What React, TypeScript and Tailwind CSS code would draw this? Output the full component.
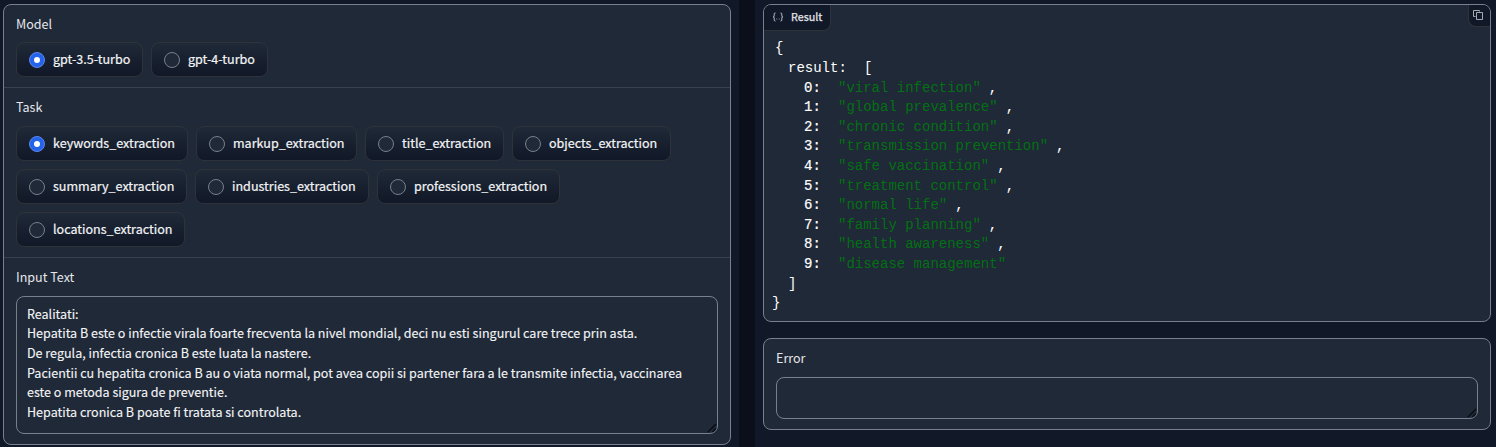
import React from 'react';

const models = [
  { name: 'gpt-3.5-turbo', width: 'w-[127px]', on: true },
  { name: 'gpt-4-turbo', width: 'w-[117px]' },
];

const tasks = [
  { name: 'keywords_extraction', width: 'w-[172px]', on: true },
  { name: 'markup_extraction', width: 'w-[161px]' },
  { name: 'title_extraction', width: 'w-[139px]' },
  { name: 'objects_extraction', width: 'w-[159px]' },
  { name: 'summary_extraction', width: 'w-[171px]' },
  { name: 'industries_extraction', width: 'w-[174px]' },
  { name: 'professions_extraction', width: 'w-[183px]' },
  { name: 'locations_extraction', width: 'w-[169px]' },
];

const keywords = [
  'viral infection',
  'global prevalence',
  'chronic condition',
  'transmission prevention',
  'safe vaccination',
  'treatment control',
  'normal life',
  'family planning',
  'health awareness',
  'disease management',
];

type Option = { name: string; width: string; on?: boolean };

function Options({ items }: { items: Option[] }) {
  return (
    <div className="flex flex-wrap gap-2">
      {items.map((o) => (
        <label
          key={o.name}
          className={`flex h-[35px] items-center whitespace-nowrap rounded-lg border border-[#2f3339] bg-linear-to-b from-[#1f2937] to-[#111827] pl-3 ${o.width}`}
        >
          <span
            className={`flex size-4 shrink-0 items-center justify-center rounded-full border ${
              o.on ? 'border-[#5c86ee] bg-[#2563eb]' : 'border-[#78808d] bg-[#1f2937]'
            }`}
          >
            {o.on && <span className="size-1.5 rounded-full bg-white" />}
          </span>
          <span className="mb-[2px] ml-2 text-[12.55px] leading-5 text-[#f3f4f6] [-webkit-text-stroke:0.2px]">{o.name}</span>
        </label>
      ))}
    </div>
  );
}

function Label({ children }: { children: React.ReactNode }) {
  return <div className="mb-2 h-5 text-[12.55px] leading-5 text-[#e5e7eb]">{children}</div>;
}

function Grip() {
  return (
    <svg className="absolute bottom-0 right-0 size-[10px]" viewBox="0 0 10 10" fill="none" stroke="#080b12" strokeWidth="1.3">
      <path d="M1 9 L9 1 M5.5 9 L9 5.5" />
    </svg>
  );
}

export default function App() {
  return (
    <div className="flex h-[447px] w-[1496px] justify-between overflow-hidden bg-[#0b0f19] font-['Noto_Sans_CJK_SC','Open_Sans',sans-serif]">
      <section className="w-[739px] bg-[#111827] pl-[3px] pt-1">
        <div className="h-[441px] w-[728px] overflow-hidden rounded-lg border border-[#78808d] bg-[#1f2937]">
          <div className="h-[83px] border-b border-[#374151] px-3 pt-[9px]">
            <Label>Model</Label>
            <Options items={models} />
          </div>
          <div className="h-[170px] border-b border-[#374151] px-3 pt-[9px]">
            <Label>Task</Label>
            <div className="mt-[9px]">
              <Options items={tasks} />
            </div>
          </div>
          <div className="px-3 pt-[9px]">
            <Label>Input Text</Label>
            <div className="relative mt-[9px] h-[138px] w-[702px] rounded-lg border border-[#78808d] px-[10px] pt-[6.8px] text-[12.54px] leading-[19.6px] text-[#f3f4f6] [-webkit-text-stroke:0.12px]">
              <p>Realitati:</p>
              <p>Hepatita B este o infectie virala foarte frecventa la nivel mondial, deci nu esti singurul care trece prin asta.</p>
              <p>De regula, infectia cronica B este luata la nastere.</p>
              <p>
                Pacientii cu hepatita cronica B au o viata normal, pot avea copii si partener fara a le transmite infectia, vaccinarea
                <br />
                este o metoda sigura de preventie.
              </p>
              <p>Hepatita cronica B poate fi tratata si controlata.</p>
              <Grip />
            </div>
          </div>
        </div>
      </section>

      <section className="flex w-[741px] flex-col gap-4 bg-[#111827] pl-2 pt-1">
        <div className="h-[318px] w-[728px] overflow-hidden rounded-lg border border-[#78808d] bg-[#1f2937]">
          <div className="flex items-start justify-between">
            <div className="flex h-[26px] w-[67px] items-center rounded-br-lg border-b border-r border-[#2f3339] bg-[#111827] pl-2">
              <svg className="mb-px size-3" viewBox="0 0 12 12" fill="none" stroke="#c3c7ce" strokeWidth="0.9">
                <path d="M3.5 2 H3 Q2.2 2 2.2 3 V5 Q2.2 6 1.2 6 Q2.2 6 2.2 7 V9 Q2.2 10 3 10 H3.5" />
                <path d="M8.5 2 H9 Q9.8 2 9.8 3 V5 Q9.8 6 10.8 6 Q9.8 6 9.8 7 V9 Q9.8 10 9 10 H8.5" />
                <path d="M4.4 8 H5.2 M6.8 8 H7.6" />
              </svg>
              <span className="mb-px ml-[7px] text-[10.75px] leading-4 text-[#e5e7eb] [-webkit-text-stroke:0.25px]">Result</span>
            </div>
            <div className="flex h-[22px] w-[22px] items-start rounded-bl-lg border-b border-l border-[#2f3339] bg-[#111827] pl-1 pt-[5px]">
              <svg className="size-[10px]" viewBox="0 0 10 10" fill="none" stroke="#a5abb5">
                <path d="M3.5 2.5 H9.5 V9.5 H3.5 Z M2.5 6.5 H.5 V.5 H6.5 V1.5" />
              </svg>
            </div>
          </div>
          <div className="whitespace-pre pl-2 pt-[8.4px] font-['Liberation_Mono',monospace] text-[14px] leading-[19.6px] text-white">
            <div className="pl-[3px]">{'{'}</div>
            <div className="flex pl-4">
              <span className="w-[76px]">result:</span>
              <span>[</span>
            </div>
            {keywords.map((word, i) => (
              <div key={word} className="flex pl-8">
                <span className="w-[34px] [-webkit-text-stroke:0.2px]">{i}:</span>
                <span className="text-[#047014]">"{word}"</span>
                <span className="ml-[8px]">{i < keywords.length - 1 ? ',' : ''}</span>
              </div>
            ))}
            <div className="pl-4">]</div>
            <div>{'}'}</div>
          </div>
        </div>
        <div className="h-[92px] w-[728px] rounded-lg border border-[#78808d] bg-[#1f2937] px-3 pt-[9px]">
          <Label>Error</Label>
          <div className="relative mt-[9px] h-[42px] w-[702px] rounded-lg border border-[#78808d]">
            <Grip />
          </div>
        </div>
      </section>
    </div>
  );
}
